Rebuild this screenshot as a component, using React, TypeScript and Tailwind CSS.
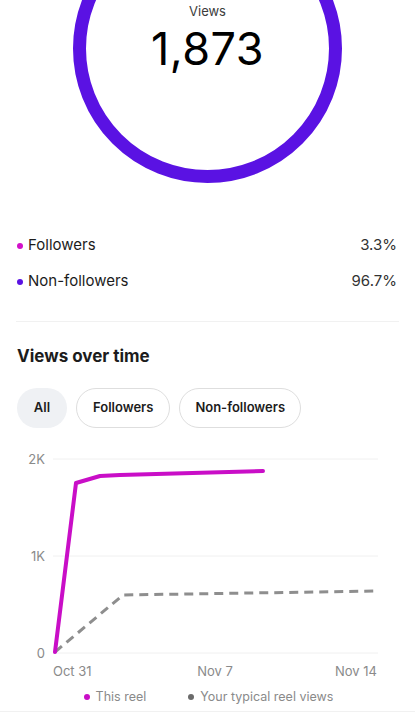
import React from "react";

export default function App() {
  const font = { fontFamily: "Inter, 'Noto Sans', sans-serif" };
  return (
    <div className="w-[415px] h-[720px] bg-white overflow-hidden text-[#1c1c1c]" style={font}>
      {/* Donut */}
      <div className="relative h-[200px] overflow-hidden">
        <svg className="absolute left-[73px] top-[-86px]" width="269" height="269" viewBox="0 0 269 269">
          <circle cx="134.5" cy="134.5" r="128" fill="none" stroke="#5a12e3" strokeWidth="13" />
        </svg>
        <div className="relative flex flex-col items-center pt-[3px]">
          <div className="text-[13px] leading-[16px] text-[#3c3c3c]">Views</div>
          <div className="mt-[8px] text-[45px] leading-[44px] font-normal tracking-[0.5px] text-black">1,873</div>
        </div>
      </div>

      {/* Breakdown rows */}
      <div className="px-[17px] pt-[36px] flex flex-col gap-[17px]">
        <div className="flex items-center justify-between h-[19px]">
          <div className="flex items-center gap-[5px]">
            <span className="w-[6px] h-[6px] rounded-full bg-[#d211c9]" />
            <span className="text-[15px]">Followers</span>
          </div>
          <span className="text-[15px] text-[#333] mr-[1px]">3.3%</span>
        </div>
        <div className="flex items-center justify-between h-[19px]">
          <div className="flex items-center gap-[5px]">
            <span className="w-[6px] h-[6px] rounded-full bg-[#5a12e3]" />
            <span className="text-[15px]">Non-followers</span>
          </div>
          <span className="text-[15px] text-[#333] mr-[1px]">96.7%</span>
        </div>
      </div>

      <div className="mx-[16px] mt-[30px] h-px bg-[#f1f1f1]" />

      {/* Views over time */}
      <div className="px-[17px] pt-[23px]">
        <div className="text-[17px] font-bold leading-[22px] text-[#1c1c1c]">Views over time</div>
        <div className="flex gap-[9px] mt-[21px]">
          <div className="h-[40px] w-[50px] rounded-full bg-[#eff1f4] flex items-center justify-center text-[13px] font-semibold">All</div>
          <div className="h-[40px] px-[16px] rounded-full border border-[#dedede] flex items-center justify-center text-[13px] font-semibold">Followers</div>
          <div className="h-[40px] px-[15px] rounded-full border border-[#dedede] flex items-center justify-center text-[13px] font-semibold">Non-followers</div>
        </div>
      </div>

      {/* Chart */}
      <div className="mt-[17px]">
        <svg width="415" height="238" viewBox="0 0 415 238" style={font}>
          <line x1="53" y1="14" x2="378" y2="14" stroke="#f0f0f0" strokeWidth="1" />
          <line x1="53" y1="111" x2="378" y2="111" stroke="#f0f0f0" strokeWidth="1" />
          <line x1="53" y1="208" x2="378" y2="208" stroke="#f0f0f0" strokeWidth="1" />
          <text x="45" y="19" textAnchor="end" fontSize="13" fill="#8a8a8a">2K</text>
          <text x="45" y="116" textAnchor="end" fontSize="13" fill="#8a8a8a">1K</text>
          <text x="45" y="213" textAnchor="end" fontSize="13" fill="#8a8a8a">0</text>
          <polyline
            points="55,207 123,150 378,146"
            fill="none"
            stroke="#8e8e8e"
            strokeWidth="3"
            strokeDasharray="9 6"
          />
          <polyline
            points="55,207 76,38 100,31 120,30 263,26"
            fill="none"
            stroke="#c90ec7"
            strokeWidth="4"
            strokeLinejoin="round"
            strokeLinecap="round"
          />
          <text x="53" y="231" fontSize="13" fill="#8a8a8a">Oct 31</text>
          <text x="215" y="231" textAnchor="middle" fontSize="13" fill="#8a8a8a">Nov 7</text>
          <text x="377" y="231" textAnchor="end" fontSize="13" fill="#8a8a8a">Nov 14</text>
        </svg>
      </div>

      {/* Legend */}
      <div className="flex justify-center gap-[42px] mt-[5px] pl-[2px]">
        <div className="flex items-center gap-[6px]">
          <span className="w-[6px] h-[6px] rounded-full bg-[#c90ec7]" />
          <span className="text-[12.5px] text-[#8a8a8a]">This reel</span>
        </div>
        <div className="flex items-center gap-[6px]">
          <span className="w-[6px] h-[6px] rounded-full bg-[#6b6b6b]" />
          <span className="text-[12.5px] text-[#8a8a8a]">Your typical reel views</span>
        </div>
      </div>
      <div className="mt-[4px] h-px bg-[#f1f1f1]" />
    </div>
  );
}
